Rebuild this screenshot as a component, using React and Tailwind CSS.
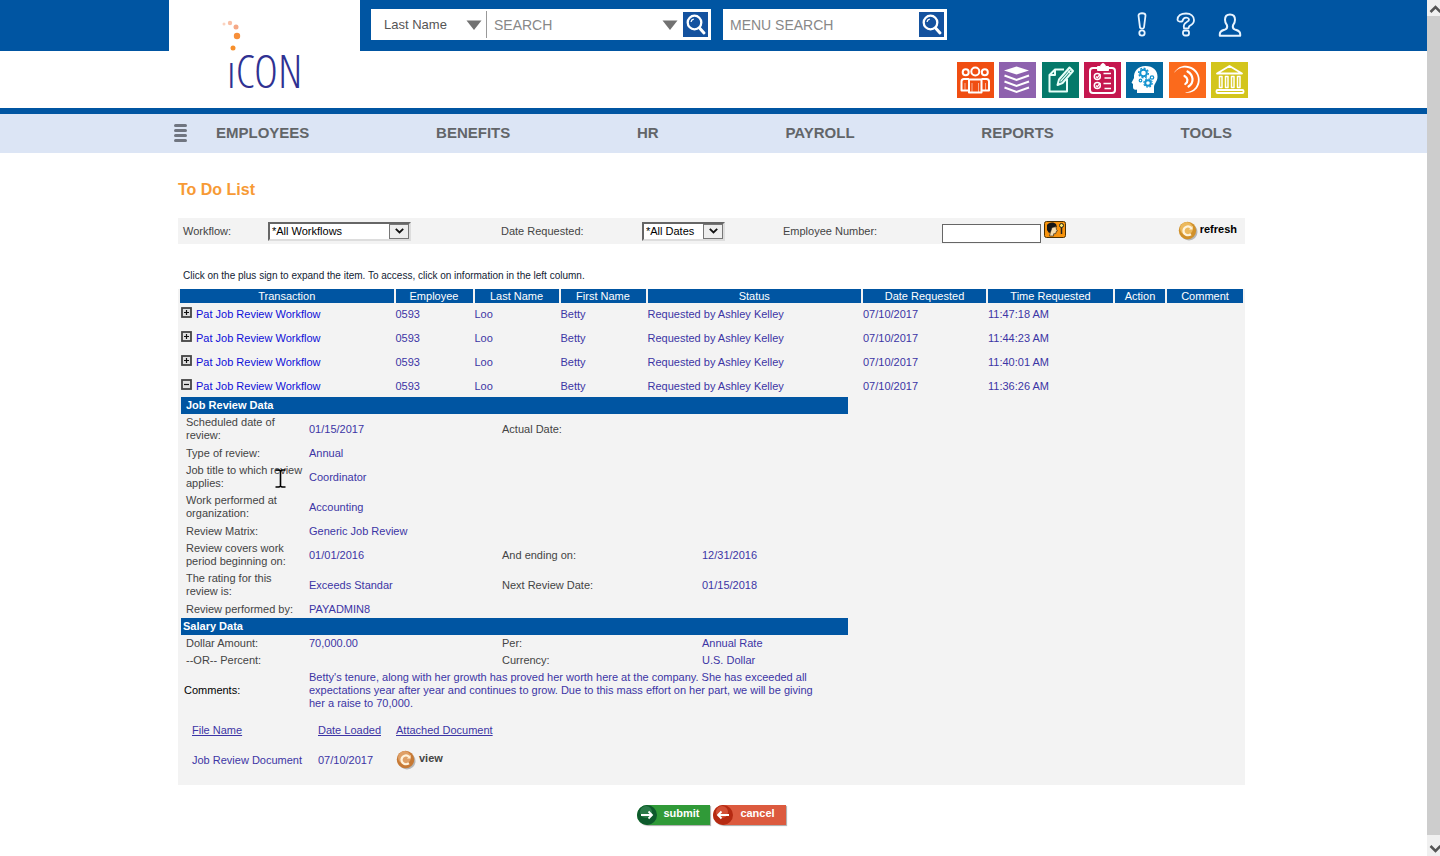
import React, { useState } from 'react';

const navItems = ['EMPLOYEES', 'BENEFITS', 'HR', 'PAYROLL', 'REPORTS', 'TOOLS'];

const columns = [
    { label: 'Transaction', width: '' },
    { label: 'Employee', width: 'w-[77px]' },
    { label: 'Last Name', width: 'w-[84px]' },
    { label: 'First Name', width: 'w-[85px]' },
    { label: 'Status', width: '' },
    { label: 'Date Requested', width: 'w-[123px]' },
    { label: 'Time Requested', width: 'w-[125px]' },
    { label: 'Action', width: 'w-[50px]' },
    { label: 'Comment', width: 'w-[76px]' }
];

const transactions = [
    { id: 1, time: '11:47:18 AM' },
    { id: 2, time: '11:44:23 AM' },
    { id: 3, time: '11:40:01 AM' },
    { id: 4, time: '11:36:26 AM' }
];

const reviewRows = [
    { label: 'Scheduled date of review:', value: '01/15/2017', label2: 'Actual Date:', height: 'h-[30px]' },
    { label: 'Type of review:', value: 'Annual', height: 'h-[18px]' },
    { label: 'Job title to which review applies:', value: 'Coordinator', height: 'h-[30px]' },
    { label: 'Work performed at organization:', value: 'Accounting', height: 'h-[30px]' },
    { label: 'Review Matrix:', value: 'Generic Job Review', height: 'h-[18px]' },
    { label: 'Review covers work period beginning on:', value: '01/01/2016', label2: 'And ending on:', value2: '12/31/2016', height: 'h-[30px]' },
    { label: 'The rating for this review is:', value: 'Exceeds Standar', label2: 'Next Review Date:', value2: '01/15/2018', height: 'h-[30px]' },
    { label: 'Review performed by:', value: 'PAYADMIN8', height: 'h-[18px]' }
];

const salaryRows = [
    { label: 'Dollar Amount:', value: '70,000.00', label2: 'Per:', value2: 'Annual Rate', height: 'h-[17px]' },
    { label: '--OR-- Percent:', value: '', label2: 'Currency:', value2: 'U.S. Dollar', height: 'h-[17px]' }
];

const Logo = () => (
    <svg width="110" height="88" viewBox="0 0 110 88" role="img" aria-label="iCON">
        <circle cx="4" cy="6" r="1.5" fill="#fbd3c0" />
        <circle cx="10" cy="5" r="2.2" fill="#f9bfa4" />
        <circle cx="16" cy="9" r="2.5" fill="#f5a886" />
        <circle cx="17" cy="18" r="3.2" fill="#f78f3a" />
        <text x="7" y="70" fontSize="46" fontFamily="'Open Sans Condensed Light', 'Noto Sans ExtraCondensed Light', 'Noto Sans ExtraCondensed', 'Roboto Condensed', 'Open Sans', sans-serif" fontWeight="300" fill="#2f3192">ıCON</text>
        <circle cx="13" cy="30" r="2.5" fill="#f78f2a" />
    </svg>
);

const Triangle = () => (
    <svg width="16" height="10" viewBox="0 0 16 10" className="pointer-events-none" aria-hidden="true">
        <path d="M0.5 0.5h15L8 10z" fill="#717171" />
    </svg>
);

const SearchButton = ({ label }) => (
    <button type="button" aria-label={label} className="flex h-[25px] w-[25px] shrink-0 items-center justify-center bg-[#14529f]">
        <svg width="23" height="23" viewBox="0 0 23 23" fill="none" stroke="#fff">
            <circle cx="10.5" cy="9.5" r="6.8" strokeWidth="2.3" />
            <path d="M15.5 15l4.5 5" strokeWidth="3" strokeLinecap="round" />
            <path d="M7 9c.2-1.6 1.2-2.5 2.8-2.8" strokeWidth="1.2" />
        </svg>
    </button>
);

const utilityIcons = [
    {
        label: 'Alerts',
        icon: (
            <svg width="12" height="26" viewBox="0 0 12 26" fill="none" stroke="#e8f4ff" strokeWidth="1.8">
                <path d="M2.5 3.5c0-3 7-3 7 0L8 15.5c-.2 1.4-3.8 1.4-4 0z" />
                <circle cx="6" cy="21" r="2.7" />
            </svg>
        )
    },
    {
        label: 'Help',
        icon: (
            <svg width="20" height="26" viewBox="0 0 20 26" fill="none" stroke="#e8f4ff" strokeWidth="1.8">
                <path d="M1.5 8C1.5 3.500 5 1.500 10 1.500s8 2.800 8 6.500c0 4-2.500 4.800-4.500 6-.8.6-.5 1.500-1 2.300H8c-.8-3.300.5-5 2.500-6.100 1.500-.9 2.500-1.300 2.500-2.400C13 6.300 11.500 5.700 10 5.700c-2 0-3 1.300-3.500 3.300-1 1-4.800.8-5-1z" />
                <rect x="7" y="18.5" width="6" height="5" rx="2" />
            </svg>
        )
    },
    {
        label: 'Account',
        icon: (
            <svg width="24" height="26" viewBox="0 0 24 26" fill="none" stroke="#e8f4ff" strokeWidth="2" strokeLinejoin="round">
                <path d="M12 2.500c-3.600 0-5 2.500-5 5.300 0 2.500.8 4.200 2 5.500.6 2.200.2 3.400-1.600 4.100C4 18.600 1.800 19 1.800 22v1.700h20.400V22c0-3-2.200-3.400-5.600-4.600-1.800-.7-2.200-1.900-1.600-4.100 1.200-1.300 2-3 2-5.500 0-2.800-1.400-5.300-5-5.300z" />
            </svg>
        )
    }
];

const appTiles = [
    {
        label: 'People',
        color: 'bg-[#f04e12]',
        icon: (
            <g fill="none" stroke="#fff" strokeWidth="2" strokeLinejoin="round">
                <circle cx="8.7" cy="10.3" r="3" />
                <circle cx="18.3" cy="9.5" r="4" />
                <circle cx="27.8" cy="10.3" r="3" />
                <path d="M12 17.500h12.500v13H12z" />
                <path d="M12 17H7c-1.500 0-2.500 1-2.500 2.500V28.500H12M24.500 17h5c1.500 0 2.500 1 2.500 2.500v9h-7.500" />
                <path d="M15 21v9M21.500 21v9M8 21v7M28.500 21v7" strokeWidth="0.8" opacity="0.7" />
            </g>
        )
    },
    {
        label: 'Layers',
        color: 'bg-[#8e62ae]',
        icon: (
            <g fill="none" stroke="#fff" strokeWidth="2">
                <path d="M17.500 4.500l12.500 4-12.500 4-12.500-4z" fill="#fff" stroke="none" />
                <path d="M5.500 13.500l12 4.500 12.500-4.500M5.500 19.500l12 4.500 12.500-4.500M5.500 25.500l12 4.500 12.500-4.500" />
            </g>
        )
    },
    {
        label: 'Notes',
        color: 'bg-[#04796a]',
        icon: (
            <g fill="none" stroke="#e6fff8" strokeWidth="2" strokeLinejoin="round">
                <path d="M22 7.500h-9l-5.500 5.500v16.500h17.500V17M7.500 13h5.500V7.500" />
                <path d="M27.500 5.500l3.500 3.500-10.500 12-5 2 1.500-5.500z" fill="#04796a" />
                <path d="M18.500 19.500L28.500 8M25 8l4 3.500" strokeWidth="1.2" />
            </g>
        )
    },
    {
        label: 'Tasks',
        color: 'bg-[#c5174f]',
        icon: (
            <g fill="none" stroke="#fff" strokeWidth="2">
                <rect x="6" y="6" width="25" height="25" rx="3" />
                <path d="M13.500 4.500h3c.5-4 4.500-4 5 0h3v4h-11z" fill="#fff" strokeWidth="1" />
                <circle cx="13.3" cy="14.5" r="3" strokeWidth="1.5" />
                <circle cx="13.3" cy="23.5" r="3" strokeWidth="1.5" />
                <path d="M12 14.500l1.300 1.300 3-4M12 23.500l1.300 1.300 3-4" strokeWidth="1.3" />
                <path d="M19.500 11.500H27M20.500 16H27M19.500 21.500H27M20.500 26.500H27" strokeWidth="1.5" />
            </g>
        )
    },
    {
        label: 'Talent',
        color: 'bg-[#04689f]',
        icon: (
            <g>
                <path d="M11 31v-3.500c-2.500.5-4 0-4-2.500v-3l-1.500-1.200L8 16c-.5-7 4-12 11.500-12C27 4 31.500 8.500 31.500 14.500c0 5.500-3.500 7-3.500 11V31z" fill="#fff" />
                <g fill="none" stroke="#1493cf">
                    <circle cx="17.5" cy="11" r="3.3" strokeWidth="2" />
                    <circle cx="17.5" cy="11" r="4.8" strokeWidth="1.4" strokeDasharray="2 1.7" />
                    <circle cx="22" cy="21" r="2.8" strokeWidth="2" />
                    <circle cx="22" cy="21" r="4.2" strokeWidth="1.2" strokeDasharray="1.8 1.5" />
                    <circle cx="26" cy="15.5" r="1.7" strokeWidth="1.3" />
                    <circle cx="14.5" cy="18.5" r="1.3" strokeWidth="1.2" />
                </g>
            </g>
        )
    },
    {
        label: 'Broadcast',
        color: 'bg-[#fb6a1c]',
        icon: (
            <g fill="none" stroke="#fff" strokeLinecap="round">
                <path d="M5 11C9 3.500 18 1.500 25 6.500c8 6 7.500 19-1 23-3 1.500-6 1.700-8 .7 4-.2 8-1.500 10.500-5 4-6 3-13-2.500-17C18 4 10 4.500 5 11z" fill="#fff" stroke="none" />
                <path d="M18.500 9.500c6 3.500 7 11 1 15" strokeWidth="2.2" />
                <path d="M15.500 14c3.500 2 4 5.500.8 8" strokeWidth="2.2" />
            </g>
        )
    },
    {
        label: 'Institution',
        color: 'bg-[#d3c51c]',
        icon: (
            <g fill="none" stroke="#fff" strokeWidth="1.8" strokeLinejoin="round">
                <path d="M18.500 4L31 11.500H6z" />
                <path d="M8.500 14.500h2.500v11H8.500zM14.500 14.500h2.500v11h-2.500zM20.500 14.500h2.500v11h-2.500zM26.500 14.500h2.500v11h-2.500z" strokeWidth="1.5" />
                <rect x="5.5" y="28" width="27" height="3" rx="1" />
            </g>
        )
    }
];

const OrbIcon = ({ dark }) => (
    <svg width="20" height="20" viewBox="0 0 20 20" aria-hidden="true">
        <circle cx="11" cy="11" r="8.5" fill="#000" opacity="0.25" />
        <circle cx="9.5" cy="9.5" r="8.7" fill={dark ? '#c77a35' : '#d1912a'} />
        <circle cx="8.5" cy="7.5" r="6.5" fill={dark ? '#dfa067' : '#ecb95d'} />
        <path d="M13 6.800C10.500 4.300 6 5.500 5.500 9.500c-.2 4 4 6 7.500 3.800" fill="none" stroke="#fff3dc" strokeWidth="2.2" />
        <path d="M14.500 5v3.500H11z" fill="#fff3dc" />
    </svg>
);

const LookupIcon = () => (
    <svg width="22" height="17" viewBox="0 0 22 17">
        <rect x="0.5" y="0.5" width="21" height="16" rx="2" fill="#f7930d" stroke="#4d3000" />
        <path d="M3 9V4c1.500-3 7-3.500 9-1l1 3-1.500-.5L9 6.500 7 11l-2 1z" fill="#161616" />
        <path d="M8 6.500l4-.8.5 3 1 1.300-1.300.6-.4 2-2.200.2V15H5.500l1-4z" fill="#f5dcae" stroke="#161616" strokeWidth="0.6" />
        <circle cx="17.5" cy="4.5" r="2" fill="#ffe96b" stroke="#222" />
        <path d="M17.500 6.500V13" stroke="#222" strokeWidth="1.5" />
    </svg>
);

const ToggleIcon = ({ open }) => (
    <svg width="11" height="11" viewBox="0 0 11 11">
        <rect x="1" y="1" width="9" height="9" fill="#e0e0e0" stroke="#444" strokeWidth="1.8" />
        <path d={open ? 'M3 5.500h5' : 'M3 5.500h5M5.500 3v5'} stroke="#111" strokeWidth="1.2" />
    </svg>
);

const ClassicSelect = ({ id, option, width }) => (
    <div className={`grid shrink-0 ${width}`}>
        <select
            id={id}
            className="col-start-1 row-start-1 h-[19px] w-full appearance-none border-2 border-t-[#666] border-r-[#ddd] border-b-[#ddd] border-l-[#666] bg-white pl-[2px] text-[11px] leading-[13px] text-black"
        >
            <option>{option}</option>
        </select>
        <span className="pointer-events-none z-10 col-start-1 row-start-1 mr-[2px] flex h-[15px] w-5 items-center justify-center self-center justify-self-end border border-[#777] bg-[#eee]">
            <svg width="9" height="6" viewBox="0 0 9 6" fill="none" stroke="#111" strokeWidth="1.8">
                <path d="M0.8 0.8l3.7 3.7 3.7-3.7" />
            </svg>
        </span>
    </div>
);

const Header = () => (
    <header>
        <div className="h-[51px] bg-[#0055a2]">
            <div className="mx-auto flex max-w-[1089px] items-start">
                <a href="#home" className="flex h-[108px] w-[191px] shrink-0 items-start bg-white pt-[18px] pl-[51px]">
                    <Logo />
                </a>
                <form className="mt-[9px] ml-[11px] flex h-[31px] w-[340px] shrink-0 items-center bg-white pr-[3px]">
                    <div className="grid h-[27px] w-[116px] items-center border-r border-[#999]">
                        <select aria-label="Search by" className="col-start-1 row-start-1 appearance-none bg-transparent pl-[13px] text-[13px] text-[#555]">
                            <option>Last Name</option>
                        </select>
                        <span className="pointer-events-none col-start-1 row-start-1 mr-1 justify-self-end">
                            <Triangle />
                        </span>
                    </div>
                    <input aria-label="Search" placeholder="SEARCH" className="min-w-0 flex-1 pl-[7px] text-sm outline-none placeholder:text-[#888]" />
                    <span className="mr-[5px]">
                        <Triangle />
                    </span>
                    <SearchButton label="Search employees" />
                </form>
                <form className="mt-[9px] ml-3 flex h-[31px] w-[224px] shrink-0 items-center bg-white pr-[3px]">
                    <input aria-label="Menu search" placeholder="MENU SEARCH" className="min-w-0 flex-1 pl-[7px] text-sm outline-none placeholder:text-[#888]" />
                    <SearchButton label="Search menu" />
                </form>
                <div className="mt-3 mr-4 ml-auto flex items-center gap-5">
                    {utilityIcons.map((item) => (
                        <button key={item.label} type="button" aria-label={item.label} className="flex w-6 justify-center">
                            {item.icon}
                        </button>
                    ))}
                </div>
            </div>
        </div>
        <div className="mx-auto flex h-[57px] max-w-[1089px] items-start justify-end pt-[11px] pr-[10px]">
            <div className="flex w-[291px] justify-between">
                {appTiles.map((tile) => (
                    <a key={tile.label} href="#app" aria-label={tile.label} className={`block ${tile.color}`}>
                        <svg width="37" height="36" viewBox="0 0 37 36">{tile.icon}</svg>
                    </a>
                ))}
            </div>
        </div>
        <nav className="border-t-[6px] border-[#0055a2] bg-[#dce5f5]">
            <div className="mx-auto flex h-[39px] max-w-[1089px] items-center pr-[26px] pb-[2px] pl-[5px]">
                <button type="button" aria-label="Menu" className="mr-[29px] flex w-[13px] shrink-0 flex-col gap-[2px]">
                    <span className="h-[3px] rounded-full bg-[#707580]" />
                    <span className="h-[3px] rounded-full bg-[#707580]" />
                    <span className="h-[3px] rounded-full bg-[#707580]" />
                    <span className="h-[3px] rounded-full bg-[#707580]" />
                </button>
                <div className="flex flex-1 justify-between">
                    {navItems.map((item) => (
                        <a key={item} href="#nav" className="text-[15px] leading-5 font-bold text-[#626569]">
                            {item}
                        </a>
                    ))}
                </div>
            </div>
        </nav>
    </header>
);

const Filters = () => (
    <form className="mt-[18px] flex h-[26px] items-center bg-[#f3f3f3] pr-2 pl-[5px] text-[11px] text-[#444]">
        <label htmlFor="workflow" className="w-[85px] shrink-0">Workflow:</label>
        <ClassicSelect id="workflow" option="*All Workflows" width="w-[143px]" />
        <label htmlFor="dates" className="ml-[90px] w-[141px] shrink-0">Date Requested:</label>
        <ClassicSelect id="dates" option="*All Dates" width="w-[83px]" />
        <label htmlFor="employee" className="ml-[58px] w-[159px] shrink-0">Employee Number:</label>
        <input id="employee" className="mt-1 h-[19px] w-[99px] shrink-0 border border-[#666] bg-white px-1" />
        <button type="button" aria-label="Look up employee" className="mb-1 ml-[3px]">
            <LookupIcon />
        </button>
        <button type="button" className="ml-auto flex items-center gap-[2px] font-bold text-black">
            <OrbIcon />
            <span className="mb-[3px]">refresh</span>
        </button>
    </form>
);

const DetailRow = ({ row }) => (
    <tr className={row.height}>
        <td className="pr-1 pl-[5px] text-[#444]">{row.label}</td>
        <td>{row.value}</td>
        <td className="text-[#444]">{row.label2}</td>
        <td>{row.value2}</td>
    </tr>
);

const ReviewDetail = () => (
    <div className="relative ml-px w-[667px]">
        <table className="w-full table-fixed text-left leading-[13px]">
            <colgroup>
                <col className="w-[128px]" />
                <col className="w-[193px]" />
                <col className="w-[200px]" />
                <col />
            </colgroup>
            <tbody>
                <tr className="h-[17px] bg-[#0055a2] text-white">
                    <th colSpan={4} className="pl-[5px]">Job Review Data</th>
                </tr>
                {reviewRows.map((row) => (
                    <DetailRow key={row.label} row={row} />
                ))}
                <tr className="h-[17px] bg-[#0055a2] text-white">
                    <th colSpan={4} className="pl-[2px]">Salary Data</th>
                </tr>
                {salaryRows.map((row) => (
                    <DetailRow key={row.label} row={row} />
                ))}
                <tr>
                    <td className="pl-[3px] text-black">Comments:</td>
                    <td colSpan={3} className="py-[2px] pr-5">
                        Betty's tenure, along with her growth has proved her worth here at the company. She has exceeded all
                        expectations year after year and continues to grow. Due to this mass effort on her part, we will be giving
                        her a raise to 70,000.
                    </td>
                </tr>
            </tbody>
        </table>

        {/* Attached files */}
        <table className="mt-[3px] ml-[11px] text-left">
            <thead>
                <tr className="h-[30px] underline">
                    <th className="w-[126px] font-normal"><a href="#file-name">File Name</a></th>
                    <th className="w-[78px] font-normal"><a href="#date-loaded">Date Loaded</a></th>
                    <th className="font-normal"><a href="#attached">Attached Document</a></th>
                </tr>
            </thead>
            <tbody>
                <tr className="h-[30px]">
                    <td>Job Review Document</td>
                    <td>07/10/2017</td>
                    <td>
                        <button type="button" className="flex items-center gap-[3px] font-bold text-[#444]">
                            <OrbIcon dark />
                            <span className="mb-[3px]">view</span>
                        </button>
                    </td>
                </tr>
            </tbody>
        </table>

        {/* Text cursor */}
        <svg className="pointer-events-none absolute top-[72px] left-[94px]" width="11" height="19" viewBox="0 0 11 19" fill="none" stroke="#000" strokeWidth="1.6" aria-hidden="true">
            <path d="M0.500 1h3.500l1.500 1 1.500-1h3.500M0.500 18h3.500l1.500-1 1.500 1h3.500M5.500 2v15" />
        </svg>
    </div>
);

const TransactionTable = () => {
    const [openId, setOpenId] = useState(4);

    return (
        <div className="mt-[7px] bg-[#f3f3f3] pb-[10px]">
            <table className="w-full table-fixed border-separate border-spacing-x-[2px] border-spacing-y-0 text-[11px] leading-[13px] text-[#3c35a5]">
                <thead>
                    <tr className="h-[14px] text-white">
                        {columns.map((col) => (
                            <th key={col.label} className={`bg-[#0055a2] font-normal ${col.width}`}>{col.label}</th>
                        ))}
                    </tr>
                </thead>
                <tbody>
                    {transactions.map((item) => {
                        const isOpen = item.id === openId;
                        return (
                            <React.Fragment key={item.id}>
                                <tr className={`align-top ${isOpen ? 'h-[22px]' : 'h-6'}`}>
                                    <td className="pt-1 pl-px">
                                        <div className="flex items-start gap-1">
                                            <button
                                                type="button"
                                                aria-label={isOpen ? 'Collapse' : 'Expand'}
                                                aria-expanded={isOpen}
                                                onClick={() => setOpenId(isOpen ? null : item.id)}
                                            >
                                                <ToggleIcon open={isOpen} />
                                            </button>
                                            <a href="#transaction" className="pt-px text-[#0f0fd8]">Pat Job Review Workflow</a>
                                        </div>
                                    </td>
                                    <td className="pt-[5px]">0593</td>
                                    <td className="pt-[5px]">Loo</td>
                                    <td className="pt-[5px]">Betty</td>
                                    <td className="pt-[5px]">Requested by Ashley Kelley</td>
                                    <td className="pt-[5px]">07/10/2017</td>
                                    <td className="pt-[5px]">{item.time}</td>
                                    <td></td>
                                    <td></td>
                                </tr>
                                {isOpen && (
                                    <tr>
                                        <td colSpan={9}>
                                            <ReviewDetail />
                                        </td>
                                    </tr>
                                )}
                            </React.Fragment>
                        );
                    })}
                </tbody>
            </table>
        </div>
    );
};

const ActionButton = ({ label, color, orb, shine, arrow }) => (
    <button type="button" className={`flex h-5 w-[73px] items-center rounded-l-full text-[11px] font-bold text-white shadow-[1px_1px_1px_#aaa] ${color}`}>
        <svg width="20" height="20" viewBox="0 0 20 20" className="shrink-0">
            <circle cx="10" cy="10" r="10" fill={orb} />
            <circle cx="9" cy="7" r="6" fill={shine} opacity="0.6" />
            <path d={arrow} fill="none" stroke="#fff" strokeWidth="1.8" />
        </svg>
        <span className="mb-[3px] flex-1 pr-1">{label}</span>
    </button>
);

const Scrollbar = () => (
    <div className="sticky top-0 flex h-screen w-[13px] shrink-0 flex-col overflow-hidden bg-[#f0f0f0]" aria-hidden="true">
        <svg width="17" height="16" viewBox="0 0 17 16" className="shrink-0" fill="none" stroke="#555" strokeWidth="2.5">
            <path d="M3.500 12l5-5 5 5" />
        </svg>
        <div className="flex-1 bg-[#cdcdcd]" />
        <svg width="17" height="21" viewBox="0 0 17 21" className="shrink-0" fill="none" stroke="#555" strokeWidth="2.5">
            <path d="M3.500 11l5 5 5-5" />
        </svg>
    </div>
);

const App = () => (
    <div className="flex min-h-screen bg-white font-['Liberation_Sans',Arial,sans-serif]">
        <div className="min-w-0 flex-1">
            <Header />
            <main className="mx-auto max-w-[1089px] pt-[27px] pr-[13px] pl-[9px]">
                <h1 className="text-base leading-5 font-bold text-[#f79a35]">To Do List</h1>
                <Filters />
                <p className="mt-[25px] pl-[5px] text-[10px] leading-[13px] text-[#123]">
                    Click on the plus sign to expand the item. To access, click on information in the left column.
                </p>
                <TransactionTable />
                <div className="mt-5 flex justify-center gap-[3px]">
                    <ActionButton label="submit" color="bg-[#309a38]" orb="#0d5a2c" shine="#3d8f5c" arrow="M4 10h11M11.500 6.500L15 10l-3.500 3.500" />
                    <ActionButton label="cancel" color="bg-[#dc5a3e]" orb="#b52a12" shine="#e8694c" arrow="M16 10H5M8.500 6.500L5 10l3.500 3.500" />
                </div>
            </main>
        </div>
        <Scrollbar />
    </div>
);

export default App;
